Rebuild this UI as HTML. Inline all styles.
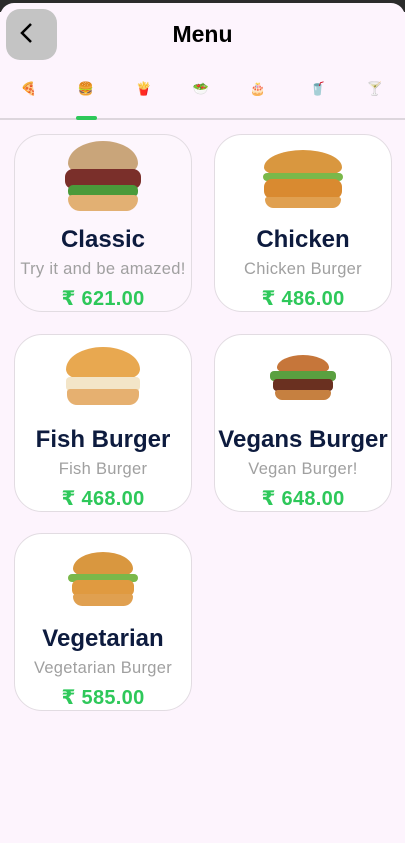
<!DOCTYPE html><html><head><style>
body{margin:0;width:405px;height:835px;background:#fdf4fd;font-family:"Liberation Sans","DejaVu Sans",sans-serif;overflow:hidden;position:relative}
.top{position:absolute;left:0;top:0;width:405px;height:12px;background:#2b2b2b}
.sheet{position:absolute;left:0;top:3px;width:405px;height:840px;background:#fdf4fd;border-radius:14px 14px 0 0}
.back{position:absolute;left:6px;top:9px;width:51px;height:51px;border-radius:14px;background:#c4c4c4}
h1{position:absolute;left:0;width:405px;top:21px;margin:0;text-align:center;font-size:23px;font-weight:bold;color:#000}
.tabs{position:absolute;top:81px;left:0;width:405px;font-size:13px}
.tabs span{position:absolute;width:20px;text-align:center}
.line{position:absolute;top:118px;left:0;width:405px;height:2px;background:#ddd6dd}
.ind{position:absolute;top:116px;left:76px;width:21px;height:4px;border-radius:2px;background:#2ec85a}
.card{position:absolute;width:176px;height:176px;border:1px solid #e2dce2;border-radius:28px;background:#fdf6fd;text-align:center;overflow:hidden}
.t{position:absolute;left:-10px;right:-10px;top:91px;font-size:24px;font-weight:bold;color:#0d1b3e}
.s{position:absolute;left:-10px;right:-10px;top:125px;font-size:16.5px;color:#a0a0a0;letter-spacing:0.3px}
.p{position:absolute;left:0;right:0;top:151px;font-size:20px;font-weight:bold;color:#2ec85a;letter-spacing:0.3px}
.b{position:absolute;left:50%;transform:translateX(-50%)}
.bun{border-radius:50% 50% 20% 20%/70% 70% 30% 30%;background:#d9973f}
</style></head><body>
<div class="top"></div><div class="sheet"></div>
<div class="back"><svg width="51" height="51"><path d="M25 15 L16 24 L25 33" stroke="#000" stroke-width="2.5" fill="none"/></svg></div>
<h1>Menu</h1>
<div class="tabs"><span style="left:19px">🍕</span><span style="left:76px">🍔</span><span style="left:134px">🍟</span><span style="left:191px">🥗</span><span style="left:248px">🎂</span><span style="left:308px">🥤</span><span style="left:365px">🍸</span></div>
<div class="line"></div><div class="ind"></div>

<div class="card" style="left:14px;top:134px">
<div class="b bun" style="top:6px;width:70px;height:32px;background:#c9a57a"></div>
<div class="b" style="top:34px;width:76px;height:20px;border-radius:8px;background:#7a2f2a"></div>
<div class="b" style="top:50px;width:70px;height:12px;background:#4a9a3a;border-radius:5px"></div>
<div class="b" style="top:60px;width:70px;height:16px;background:#e2b073;border-radius:4px 4px 12px 12px"></div>
<div class="t">Classic</div><div class="s">Try it and be amazed!</div><div class="p">₹ 621.00</div></div>

<div class="card" style="left:214px;top:134px;background:#fff">
<div class="b bun" style="top:15px;width:78px;height:25px"></div>
<div class="b" style="top:38px;width:80px;height:8px;background:#7ab84a;border-radius:4px"></div>
<div class="b" style="top:44px;width:78px;height:20px;background:#d98a30;border-radius:8px"></div>
<div class="b" style="top:62px;width:76px;height:11px;background:#e0a050;border-radius:3px 3px 10px 10px"></div>
<div class="t">Chicken</div><div class="s">Chicken Burger</div><div class="p">₹ 486.00</div></div>

<div class="card" style="left:14px;top:334px;background:#fff">
<div class="b bun" style="top:12px;width:74px;height:32px;background:#e8a850"></div>
<div class="b" style="top:42px;width:74px;height:14px;background:#f3e5c8;border-radius:4px"></div>
<div class="b" style="top:54px;width:72px;height:16px;background:#e6b070;border-radius:3px 3px 10px 10px"></div>
<div class="t">Fish Burger</div><div class="s">Fish Burger</div><div class="p">₹ 468.00</div></div>

<div class="card" style="left:214px;top:334px;background:#fff">
<div class="b bun" style="top:20px;width:52px;height:18px;background:#c6763a"></div>
<div class="b" style="top:36px;width:66px;height:10px;background:#5aa040;border-radius:4px"></div>
<div class="b" style="top:44px;width:60px;height:12px;background:#6a3020;border-radius:4px"></div>
<div class="b" style="top:55px;width:56px;height:10px;background:#c68040;border-radius:3px 3px 8px 8px"></div>
<div class="t">Vegans Burger</div><div class="s">Vegan Burger!</div><div class="p">₹ 648.00</div></div>

<div class="card" style="left:14px;top:533px;background:#fff">
<div class="b bun" style="top:18px;width:60px;height:24px"></div>
<div class="b" style="top:40px;width:70px;height:8px;background:#7ab84a;border-radius:4px"></div>
<div class="b" style="top:46px;width:62px;height:16px;background:#e09a40;border-radius:6px"></div>
<div class="b" style="top:60px;width:60px;height:12px;background:#e0a050;border-radius:3px 3px 10px 10px"></div>
<div class="t">Vegetarian</div><div class="s">Vegetarian Burger</div><div class="p">₹ 585.00</div></div>
</body></html>
